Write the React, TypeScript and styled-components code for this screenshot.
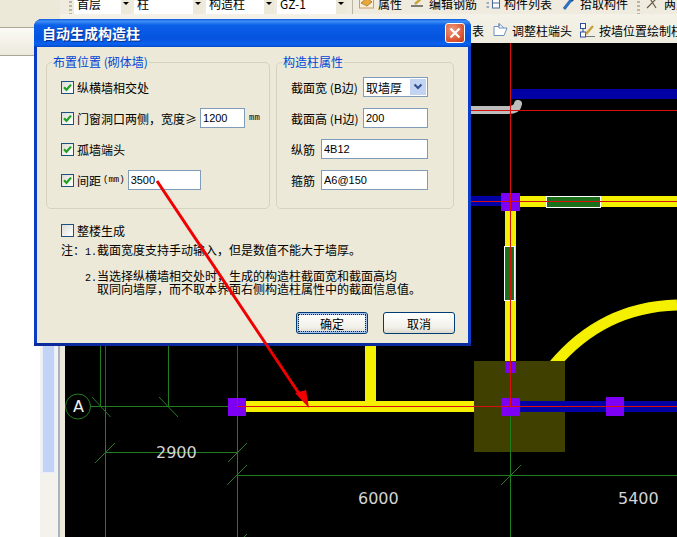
import React from 'react';
import styled, { createGlobalStyle } from 'styled-components';

const cjk = '"Noto Sans CJK SC", "Liberation Sans", sans-serif';

const Global = createGlobalStyle`
  html, body { margin: 0; padding: 0; background: #fff; }
  body { font-family: ${cjk}; font-size: 12px; color: #000; }
`;

const Shell = styled.div`
  position: relative;
  display: flex;
  width: 677px;
  height: 537px;
  overflow: hidden;
`;

const Sidebar = styled.div`
  display: flex;
  flex-direction: column;
  width: 60px;
  flex: none;
`;

const SideTab = styled.div<{ $light?: boolean }>`
  height: 27px;
  flex: none;
  border-bottom: 1px solid #a9a798;
  background: ${({ $light }) => ($light ? 'linear-gradient(#fbfaf6, #ece9dc)' : '#ece9d8')};
`;

const SideBody = styled.div`
  flex: 1;
  display: flex;
  justify-content: flex-end;
  background: #fff;
`;

const ScrollTrack = styled.div`
  width: 20px;
  background: #f4f2ec;
  border-right: 2px solid #a9b2c2;
  box-sizing: border-box;
  padding: 0 3px 64px 2px;
`;

const ScrollThumb = styled.div`
  height: 100%;
  background: #c3d3f5;
  border: 1px solid #e6edfb;
  border-top: 0;
  box-sizing: border-box;
`;

const Main = styled.div`
  flex: 1;
  display: flex;
  flex-direction: column;
  min-width: 0;
  background: #ece9d8;
`;

const ToolRowTop = styled.div`
  height: 14px;
  box-sizing: border-box;
  padding: 0 0 7px 9px;
  display: flex;
  align-items: center;
  overflow: hidden;
  white-space: nowrap;
  background: #efecdf;
  flex: none;
`;

const ToolRowBottom = styled.div`
  height: 29px;
  box-sizing: border-box;
  padding: 3px 0 0 412px;
  display: flex;
  align-items: center;
  overflow: hidden;
  white-space: nowrap;
  background: linear-gradient(#f4f2e8, #efecdf);
  flex: none;
`;

const Gripper = styled.span<{ $after: number }>`
  width: 3px;
  height: 22px;
  flex: none;
  margin-right: ${({ $after }) => $after}px;
  background: repeating-linear-gradient(#b9b6a4 0 2px, transparent 2px 4px);
`;

const ComboGroup = styled.div`
  display: flex;
  gap: 3px;
  margin-right: 6px;
`;

const Combo = styled.div<{ $w: number }>`
  width: ${({ $w }) => $w}px;
  height: 20px;
  display: flex;
  align-items: center;
  justify-content: space-between;
  background: #fff;
  padding-left: 3px;
  box-sizing: border-box;
`;

const ComboArrow = styled.span`
  width: 10px;
  height: 100%;
  background: #ece9d8;
  display: flex;
  align-items: center;
  justify-content: center;
  &::after {
    content: '';
    border-left: 3px solid transparent;
    border-right: 3px solid transparent;
    border-top: 3px solid #000;
  }
`;

const Separator = styled.span`
  width: 1px;
  height: 22px;
  flex: none;
  margin-right: 6px;
  background: #b9b6a4;
`;

const Tool = styled.div<{ $after?: number }>`
  display: flex;
  align-items: center;
  gap: 4px;
  flex: none;
  margin-right: ${({ $after }) => $after ?? 0}px;
`;

const CanvasWrap = styled.div`
  flex: 1;
  margin-left: 5px;
  background: #000;
  min-height: 0;
`;

const Drawing = styled.svg`
  display: block;
  width: 100%;
  height: 100%;
`;

const Dialog = styled.div`
  position: absolute;
  left: 34px;
  top: 19px;
  width: 437px;
  height: 327px;
  display: flex;
  flex-direction: column;
  border-radius: 8px 8px 0 0;
  background: #0a3cc8;
  box-sizing: border-box;
  padding: 0 3px 3px;
  box-shadow: inset 0 -3px 0 #0a2a9e;
`;

const TitleBar = styled.div`
  height: 28px;
  flex: none;
  margin: 0 -3px;
  padding: 0 6px 0 8px;
  display: flex;
  align-items: center;
  justify-content: space-between;
  border-radius: 8px 8px 0 0;
  background: linear-gradient(#0a5ae0 0, #3f8ff5 8%, #0a5fe8 22%, #0553de 70%, #0a62ee 90%, #0349c8 100%);
`;

const Title = styled.span`
  color: #fff;
  font-size: 14px;
  font-weight: 700;
  text-shadow: 1px 1px 0 #0a2f8c;
`;

const CloseButton = styled.button`
  width: 20px;
  height: 20px;
  padding: 0;
  display: flex;
  align-items: center;
  justify-content: center;
  border: 1px solid #fff;
  border-radius: 3px;
  background: radial-gradient(circle at 35% 30%, #ec9a7e, #d8512c 70%, #b83a1c);
`;

const Body = styled.div`
  flex: 1;
  display: flex;
  flex-direction: column;
  background: #ece9d8;
  padding: 8px 13px 9px 9px;
  min-height: 0;
`;

const Groups = styled.div`
  display: flex;
  gap: 6px;
  flex: none;
`;

const Group = styled.fieldset<{ $w: number }>`
  width: ${({ $w }) => $w}px;
  height: 154px;
  margin: 0;
  box-sizing: border-box;
  border: 1px solid #d5d2c0;
  border-radius: 5px;
  padding: 8px 0 0 14px;
  display: flex;
  flex-direction: column;
  gap: 11px;
`;

const Legend = styled.legend`
  color: #0046d5;
  font-size: 12px;
  line-height: 14px;
  padding: 0 1px;
  margin-left: -9px;
`;

const Row = styled.div`
  height: 20px;
  display: flex;
  align-items: center;
  white-space: nowrap;
`;

const CheckBox = styled.span`
  width: 13px;
  height: 13px;
  flex: none;
  margin-right: 3px;
  box-sizing: border-box;
  border: 1px solid #1c5180;
  display: flex;
  align-items: center;
  justify-content: center;
  background: linear-gradient(135deg, #dcdcd6, #fff);
`;

const TextInput = styled.input<{ $w: number; $gap?: number }>`
  width: ${({ $w }) => $w}px;
  height: 20px;
  flex: none;
  margin-left: ${({ $gap }) => $gap ?? 0}px;
  box-sizing: border-box;
  border: 1px solid #7f9db9;
  padding: 0 2px;
  background: #fff;
  font-family: "Liberation Sans", sans-serif;
  font-size: 11px;
  color: #000;
  outline: none;
`;

const Unit = styled.span<{ $gap: number; $after?: number }>`
  font-family: "Liberation Mono", monospace;
  font-size: 9px;
  margin-left: ${({ $gap }) => $gap}px;
  margin-right: ${({ $after }) => $after ?? 0}px;
`;

const FieldLabel = styled.span<{ $w: number }>`
  width: ${({ $w }) => $w}px;
  flex: none;
  white-space: nowrap;
`;

const SelectBox = styled.div`
  width: 65px;
  height: 20px;
  flex: none;
  box-sizing: border-box;
  border: 1px solid #7f9db9;
  background: #fff;
  display: flex;
  align-items: center;
  justify-content: space-between;
  padding: 1px 1px 1px 2px;
`;

const SelectArrow = styled.span`
  width: 16px;
  height: 100%;
  display: flex;
  align-items: center;
  justify-content: center;
  background: #c3d3f2;
`;

const WholeRow = styled(Row)`
  margin: 11px 0 0 15px;
`;

const Notes = styled.div`
  margin-top: 3px;
  display: flex;
  flex-direction: column;
  gap: 10px;
`;

const Note = styled.div`
  display: flex;
  line-height: 13px;
  padding-left: 15px;
`;

const NoteMark = styled.span`
  width: 36px;
  flex: none;
  text-align: right;
  white-space: nowrap;
`;

const NoteNum = styled.span`
  font-family: "Liberation Mono", monospace;
  font-size: 10px;
`;

const NoteText = styled.span`
  white-space: pre-line;
`;

const Actions = styled.div`
  margin-top: auto;
  display: flex;
  justify-content: flex-end;
  gap: 15px;
`;

const Button = styled.button<{ $focus?: boolean }>`
  width: 72px;
  height: 22px;
  padding: 0;
  font-family: ${cjk};
  font-size: 12px;
  color: #000;
  border: 1px solid #003c74;
  border-radius: 3px;
  background: linear-gradient(#ffffff, #f2f1ea 70%, #dcd8cc);
  ${({ $focus }) =>
    $focus
      ? `box-shadow: inset 0 0 0 2px #a9c4ee; outline: 1px dotted #222; outline-offset: -3px;`
      : ''}
`;

const Overlay = styled.svg`
  position: absolute;
  left: 0;
  top: 0;
  width: 677px;
  height: 537px;
  pointer-events: none;
`;

const Check = () => (
  <svg width="9" height="9" viewBox="0 0 9 9">
    <path d="M1 4.2 L3.5 6.8 L8 1.6" fill="none" stroke="#21a121" strokeWidth="2.2" />
  </svg>
);

const greenTicks = [
  [92, 397, 110.5, 417],
  [159, 397, 178, 417],
  [95, 463, 115, 443],
  [228, 462, 247, 443],
  [227, 485, 247, 465],
  [501, 485, 521, 465],
  [240, 541, 247, 534],
];

const App = () => {
  return (
    <>
      <Global />
      <Shell>
        <Sidebar>
          <SideTab />
          <SideTab $light />
          <SideBody>
            <ScrollTrack>
              <ScrollThumb />
            </ScrollTrack>
          </SideBody>
        </Sidebar>
        <Main>
          <ToolRowTop>
            <Gripper $after={2} />
            <ComboGroup>
              <Combo $w={57}>首层<ComboArrow /></Combo>
              <Combo $w={69}>柱<ComboArrow /></Combo>
              <Combo $w={68}>构造柱<ComboArrow /></Combo>
              <Combo $w={69}>GZ-1<ComboArrow /></Combo>
            </ComboGroup>
            <Separator />
            <Tool $after={8}>
              <svg width="15" height="14" viewBox="0 0 15 14">
                <rect x="0.5" y="-3" width="14" height="14" fill="#fbeed2" stroke="#c99a6a" />
                <path d="M2 6 L8 1 L13 5 L8 9 Z" fill="#e8a83a" stroke="#8c6a2a" strokeWidth="0.7" />
              </svg>
              属性
            </Tool>
            <Tool $after={9}>
              <svg width="15" height="14" viewBox="0 0 15 14">
                <path d="M1 9 H13" stroke="#333" strokeWidth="1.2" />
                <path d="M5 7 L13 0" stroke="#c9a23a" strokeWidth="2.4" />
              </svg>
              编辑钢筋
            </Tool>
            <Tool $after={10}>
              <svg width="14" height="14" viewBox="0 0 14 14">
                <rect x="6.5" y="-2" width="7" height="13" fill="#fff" stroke="#4a6a9a" />
                <path d="M7 2.5 H13 M7 6 H13 M0.5 2 H3 M0.5 6 H3 M0.5 10 H3" stroke="#4a6a9a" strokeWidth="1.2" />
              </svg>
              构件列表
            </Tool>
            <Tool $after={9}>
              <svg width="14" height="14" viewBox="0 0 14 14">
                <path d="M2 12 L9 3" stroke="#2f6fc0" strokeWidth="3" />
                <path d="M8 2 L12 -2 L14 1 L10 5 Z" fill="#1a4c8c" />
              </svg>
              拾取构件
            </Tool>
            <Gripper $after={5} />
            <Tool>
              <svg width="15" height="14" viewBox="0 0 15 14">
                <path d="M0 2 H15 M2 11 L13 0 M4 0 L11 11" stroke="#6a5a4a" strokeWidth="1.2" fill="none" />
              </svg>
              两点
            </Tool>
          </ToolRowTop>
          <ToolRowBottom>
            <Tool $after={9}>表</Tool>
            <Tool $after={8}>
              <svg width="15" height="15" viewBox="0 0 15 15">
                <path d="M1 3.5 H6 V0.5 L11 5 H14 L11 12.5 H1 Z" fill="#fff" stroke="#6c8fc0" />
                <path d="M6 0.5 V5 H11" fill="none" stroke="#6c8fc0" />
              </svg>
              调整柱端头
            </Tool>
            <Tool>
              <svg width="15" height="15" viewBox="0 0 15 15">
                <rect x="0.5" y="0.5" width="5" height="5" fill="#fff" stroke="#2f4fa0" />
                <rect x="0.5" y="9" width="5" height="5" fill="#fff" stroke="#2f4fa0" />
                <path d="M3 5.5 V9" stroke="#2f4fa0" />
                <path d="M6 13.5 H15" stroke="#777" />
                <path d="M6 11 L13 3" stroke="#c9a23a" strokeWidth="2.4" />
              </svg>
              按墙位置绘制柱
            </Tool>
          </ToolRowBottom>
          <CanvasWrap>
            <Drawing viewBox="65 43 612 494">
              <g fill="#0000a4">
                <rect x="511" y="89" width="166" height="10" />
                <rect x="471" y="196" width="30" height="10" />
              </g>
              <path d="M471 110 H508 Q517 110 518 104" fill="none" stroke="#bdbdbd" strokeWidth="8" strokeLinecap="round" />

              <g fill="#f4f000">
                <rect x="520" y="196" width="157" height="11" />
                <rect x="505" y="210" width="11" height="152" />
                <rect x="365" y="346" width="11" height="56" />
                <rect x="245" y="401" width="230" height="11" />
              </g>
              <path d="M553 366 Q602 307 677 305" fill="none" stroke="#f4f000" strokeWidth="11" />

              <rect x="474" y="361" width="91" height="91" fill="#404000" />

              <g fill="#1b6f1b" stroke="#fff" strokeWidth="1">
                <rect x="546.5" y="196.5" width="54" height="11" />
                <rect x="504.5" y="246.5" width="10" height="54" />
              </g>

              <g stroke="#1f7f1f" strokeWidth="1" fill="none" shapeRendering="crispEdges">
                <path d="M65 406.5 H237" />
                <path d="M105.5 452 H237.5" />
                <path d="M237 475.5 H677" />
                <path d="M100.5 346 V406" />
                <path d="M168.5 346 V406" />
                <path d="M105.5 407 V537" />
                <path d="M237.5 407 V537" />
                <path d="M510.5 407 V537" />
              </g>
              <g stroke="#2a762a" strokeWidth="1">
                {greenTicks.map(([x1, y1, x2, y2]) => (
                  <line key={`${x1}-${y1}`} x1={x1} y1={y1} x2={x2} y2={y2} />
                ))}
              </g>
              <circle cx="78" cy="406.5" r="12.5" fill="#000" stroke="#1f7f1f" />

              <g fill="#0000a4">
                <rect x="520" y="401" width="157" height="11" />
              </g>
              <g fill="#7d00f5">
                <rect x="501" y="193" width="19" height="18" />
                <rect x="505" y="362" width="11" height="11" />
                <rect x="228" y="398" width="18" height="18" />
                <rect x="501" y="398" width="19" height="18" />
                <rect x="606" y="397" width="18" height="19" />
              </g>

              <g stroke="#d80f0f" strokeWidth="1" fill="none" shapeRendering="crispEdges">
                <path d="M510.5 43 V407" />
                <path d="M105.5 346 V406" />
                <path d="M237.5 346 V406" />
                <path d="M471 110.5 H677" />
                <path d="M471 201.5 H677" />
                <path d="M237 406.5 H677" />
              </g>

              <g fontFamily="'DejaVu Sans', sans-serif" fontSize="16" fill="#d4d4d4">
                <text x="156" y="458">2900</text>
                <text x="358" y="504">6000</text>
                <text x="618" y="504">5400</text>
                <text x="73" y="412" fill="#f0f0f0">A</text>
              </g>
            </Drawing>
          </CanvasWrap>
        </Main>

        <Dialog>
          <TitleBar>
            <Title>自动生成构造柱</Title>
            <CloseButton aria-label="关闭">
              <svg width="12" height="12" viewBox="0 0 12 12">
                <path d="M1.5 1.5 L10.5 10.5 M10.5 1.5 L1.5 10.5" stroke="#fff" strokeWidth="2.2" />
              </svg>
            </CloseButton>
          </TitleBar>
          <Body>
            <Groups>
              <Group $w={224}>
                <Legend>布置位置 (砌体墙)</Legend>
                <Row><CheckBox><Check /></CheckBox>纵横墙相交处</Row>
                <Row>
                  <CheckBox><Check /></CheckBox>门窗洞口两侧，宽度≥
                  <TextInput $w={45} $gap={3} readOnly defaultValue="1200" />
                  <Unit $gap={4}>mm</Unit>
                </Row>
                <Row><CheckBox><Check /></CheckBox>孤墙端头</Row>
                <Row>
                  <CheckBox><Check /></CheckBox>间距
                  <Unit $gap={2} $after={3}>(mm)</Unit>
                  <TextInput $w={73} readOnly defaultValue="3500" />
                </Row>
              </Group>
              <Group $w={178}>
                <Legend>构造柱属性</Legend>
                <Row>
                  <FieldLabel $w={72}>截面宽 (B边)</FieldLabel>
                  <SelectBox>
                    取墙厚
                    <SelectArrow>
                      <svg width="10" height="8" viewBox="0 0 10 8">
                        <path d="M1.5 1.5 L5 5 L8.5 1.5" fill="none" stroke="#2f4f8f" strokeWidth="2" />
                      </svg>
                    </SelectArrow>
                  </SelectBox>
                </Row>
                <Row>
                  <FieldLabel $w={72}>截面高 (H边)</FieldLabel>
                  <TextInput $w={65} readOnly defaultValue="200" />
                </Row>
                <Row>
                  <FieldLabel $w={30}>纵筋</FieldLabel>
                  <TextInput $w={107} readOnly defaultValue="4B12" />
                </Row>
                <Row>
                  <FieldLabel $w={30}>箍筋</FieldLabel>
                  <TextInput $w={107} readOnly defaultValue="A6@150" />
                </Row>
              </Group>
            </Groups>
            <WholeRow><CheckBox />整楼生成</WholeRow>
            <Notes>
              <Note>
                <NoteMark>注：<NoteNum>1.</NoteNum></NoteMark>
                <NoteText>截面宽度支持手动输入，但是数值不能大于墙厚。</NoteText>
              </Note>
              <Note>
                <NoteMark><NoteNum>2.</NoteNum></NoteMark>
                <NoteText>{'当选择纵横墙相交处时，生成的构造柱截面宽和截面高均\n取同向墙厚，而不取本界面右侧构造柱属性中的截面信息值。'}</NoteText>
              </Note>
            </Notes>
            <Actions>
              <Button $focus>确定</Button>
              <Button>取消</Button>
            </Actions>
          </Body>
        </Dialog>

        <Overlay viewBox="0 0 677 537">
          <line x1="157" y1="181" x2="302" y2="398" stroke="#f00000" strokeWidth="3" />
          <path d="M295 393 L306 390 L309 408 Z" fill="#f00000" />
        </Overlay>
      </Shell>
    </>
  );
};

export default App;
